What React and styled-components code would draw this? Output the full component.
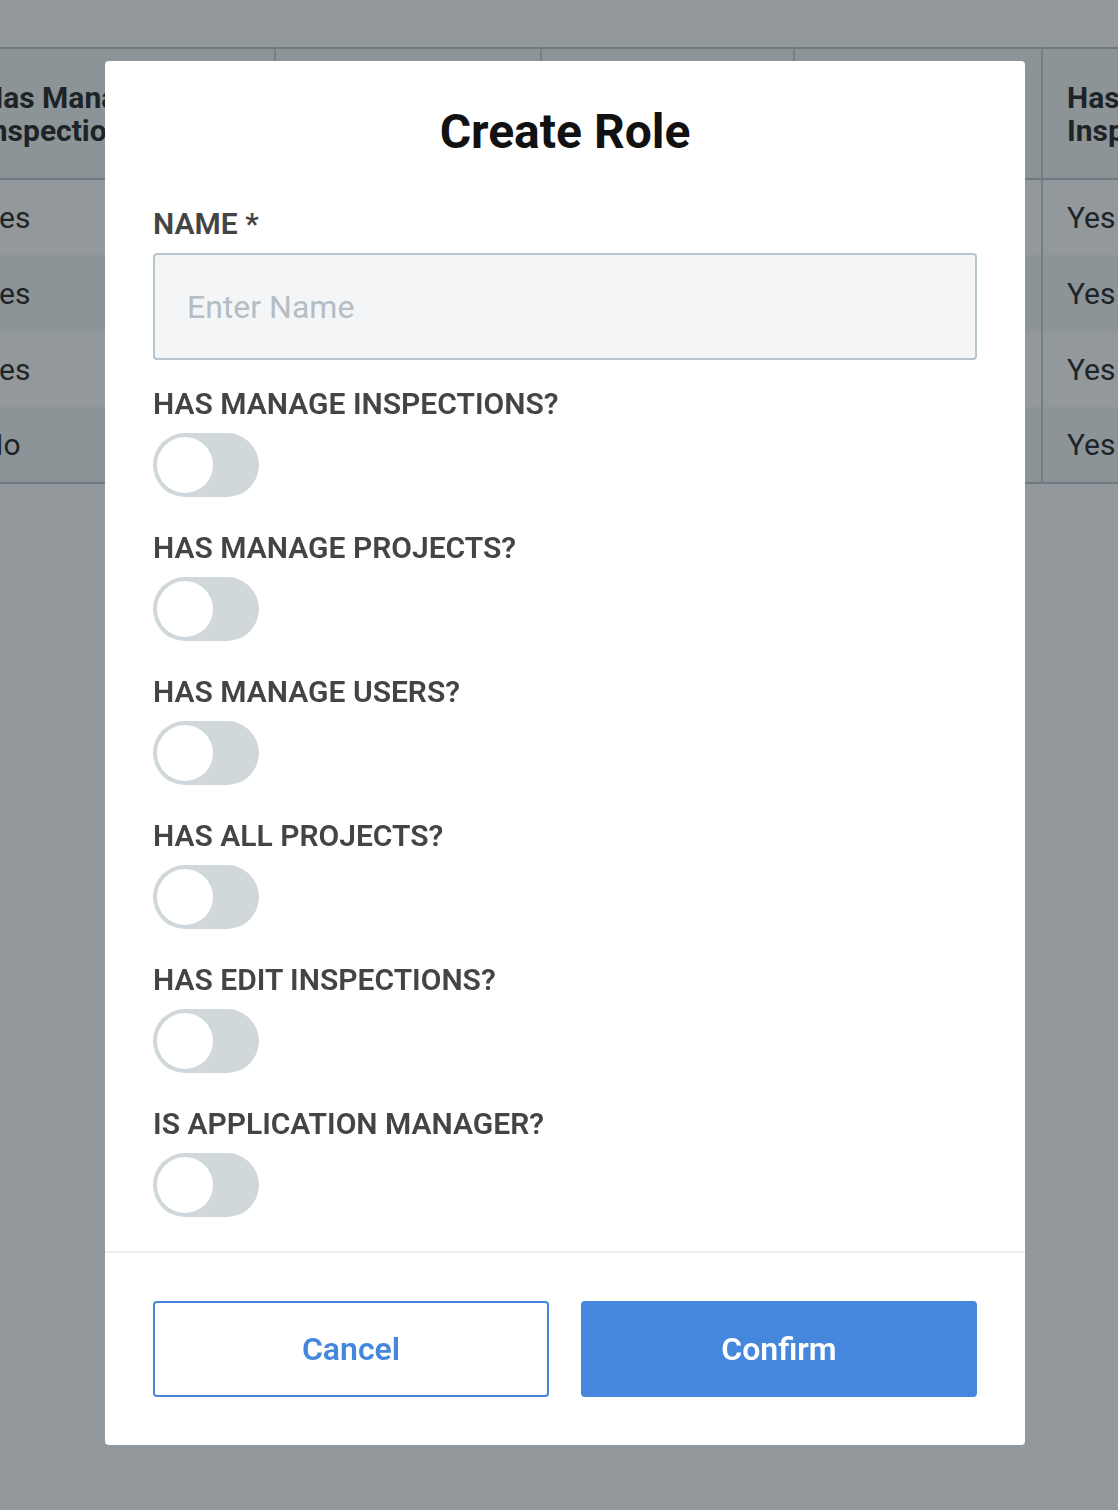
import React from "react";
import styled, { createGlobalStyle } from "styled-components";

const GlobalStyle = createGlobalStyle`
  body {
    margin: 0;
    background: #ffffff;
    font-family: Roboto, "Open Sans", sans-serif;
    overflow: hidden;
  }
  * {
    box-sizing: border-box;
  }
`;

const Page = styled.div`
  width: 1118px;
  height: 1510px;
  overflow: hidden;
  padding-top: 47px;
`;

const Table = styled.table`
  margin-left: -42px;
  border-collapse: collapse;
  table-layout: fixed;
  width: 1384px;
  border-top: 2px solid #b6c2c8;
  border-bottom: 2px solid #b6c2c8;
  color: #141414;
`;

const HeadCell = styled.th`
  height: 131px;
  padding: 0 24px;
  text-align: left;
  font-size: 30px;
  line-height: 33px;
  font-weight: 700;
  background: #f4f6f7;
  border-bottom: 2px solid #b6c2c8;
  border-left: ${(p) => (p.$first ? "none" : "2px solid #c3ccd1")};
  vertical-align: middle;
  white-space: normal;
  overflow: hidden;
`;

const Row = styled.tr`
  background: ${(p) => (p.$alt ? "#f4f6f7" : "#ffffff")};
`;

const Cell = styled.td`
  height: 76px;
  padding: 0 24px;
  font-size: 30px;
  font-weight: 400;
  border-left: ${(p) => (p.$first ? "none" : "2px solid #c3ccd1")};
  white-space: nowrap;
  overflow: hidden;
`;

const Overlay = styled.div`
  position: fixed;
  inset: 0;
  background: rgba(38, 50, 56, 0.5);
  padding: 61px 0 0 105px;
`;

const Modal = styled.div`
  width: 920px;
  background: #ffffff;
  border-radius: 4px;
  display: flex;
  flex-direction: column;
`;

const Title = styled.h2`
  margin: 0;
  padding: 44px 48px 0;
  text-align: center;
  font-size: 48px;
  line-height: 54px;
  font-weight: 700;
  color: #111111;
`;

const Form = styled.div`
  padding: 47px 48px 34px;
  display: flex;
  flex-direction: column;
`;

const Field = styled.div`
  display: flex;
  flex-direction: column;
  gap: 11px;
  margin-bottom: ${(p) => p.$space}px;
  &:last-child {
    margin-bottom: 0;
  }
`;

const Label = styled.label`
  font-size: 30px;
  line-height: 36px;
  font-weight: 600;
  color: #444444;
  text-transform: uppercase;
`;

const Input = styled.input`
  height: 107px;
  width: 100%;
  padding: 0 32px;
  border: 2px solid #b8c4cb;
  border-radius: 4px;
  background: #f4f5f7;
  font-family: inherit;
  font-size: 32px;
  color: #333333;
  outline: none;
  &::placeholder {
    color: #b3bdc3;
  }
`;

const Switch = styled.button`
  width: 106px;
  height: 64px;
  padding: 4px;
  border: none;
  border-radius: 32px;
  background: ${(p) => (p.$on ? "#4587dd" : "#d0d8dc")};
  display: flex;
  justify-content: ${(p) => (p.$on ? "flex-end" : "flex-start")};
  cursor: pointer;
`;

const Knob = styled.span`
  width: 56px;
  height: 56px;
  border-radius: 50%;
  background: #ffffff;
`;

const Footer = styled.div`
  border-top: 2px solid #eeeeee;
  padding: 48px;
  display: flex;
  gap: 32px;
`;

const Button = styled.button`
  flex: 1;
  height: 96px;
  border-radius: 4px;
  border: 2px solid #4587dd;
  background: ${(p) => (p.$primary ? "#4587dd" : "#ffffff")};
  color: ${(p) => (p.$primary ? "#ffffff" : "#4587dd")};
  font-family: inherit;
  font-size: 32px;
  font-weight: 600;
  cursor: pointer;
`;

const columns = [
  "Has Manage Inspections?",
  "Has Manage Projects?",
  "Has Manage Users?",
  "Has All Projects?",
  "Has Edit Inspections?",
];

const rows = [
  ["Yes", "Yes", "Yes", "Yes", "Yes"],
  ["Yes", "No", "Yes", "Yes", "Yes"],
  ["Yes", "Yes", "No", "No", "Yes"],
  ["No", "No", "No", "No", "Yes"],
];

const widths = [317, 266, 253, 248, 300];

const toggles = [
  "Has manage inspections?",
  "Has manage projects?",
  "Has manage users?",
  "Has all projects?",
  "Has edit inspections?",
  "Is application manager?",
];

const App = () => {
  return (
    <>
      <GlobalStyle />
      <Page>
        <Table>
          <colgroup>
            {widths.map((w, i) => (
              <col key={i} style={{ width: w }} />
            ))}
          </colgroup>
          <thead>
            <tr>
              {columns.map((c, i) => (
                <HeadCell key={c} $first={i === 0}>
                  {c}
                </HeadCell>
              ))}
            </tr>
          </thead>
          <tbody>
            {rows.map((r, i) => (
              <Row key={i} $alt={i % 2 === 1}>
                {r.map((v, j) => (
                  <Cell key={j} $first={j === 0}>
                    {v}
                  </Cell>
                ))}
              </Row>
            ))}
          </tbody>
        </Table>
      </Page>
      <Overlay>
        <Modal>
          <Title>Create Role</Title>
          <Form>
            <Field $space={26}>
              <Label>Name *</Label>
              <Input placeholder="Enter Name" />
            </Field>
            {toggles.map((t) => (
              <Field key={t} $space={33}>
                <Label>{t}</Label>
                <Switch type="button">
                  <Knob />
                </Switch>
              </Field>
            ))}
          </Form>
          <Footer>
            <Button>Cancel</Button>
            <Button $primary>Confirm</Button>
          </Footer>
        </Modal>
      </Overlay>
    </>
  );
};

export default App;
